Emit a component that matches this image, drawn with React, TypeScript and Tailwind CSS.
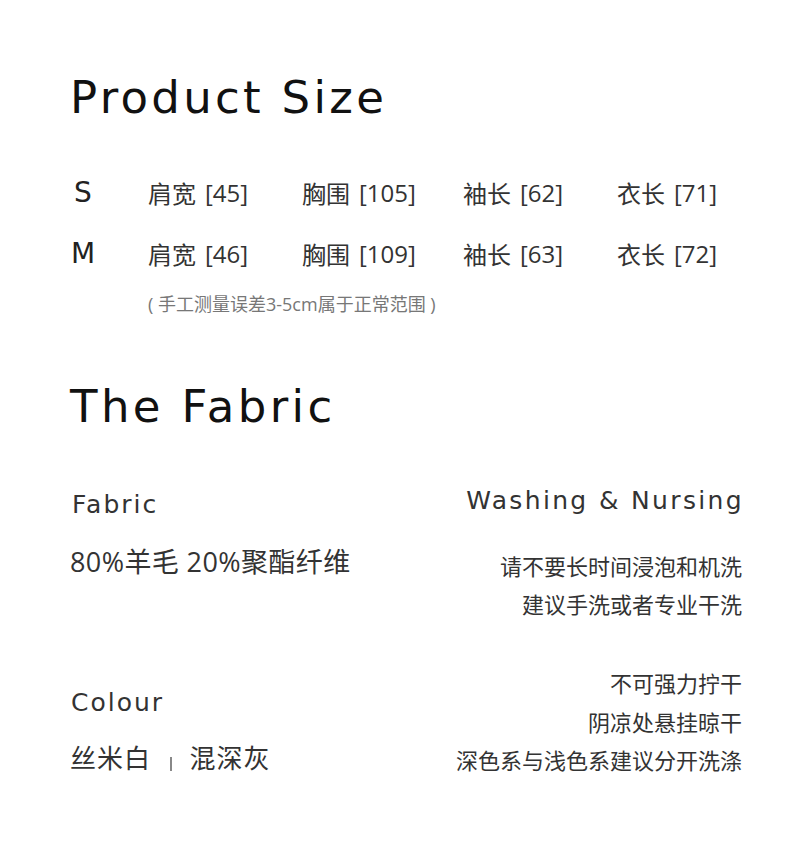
import React from 'react';

const latin = "font-['DejaVu_Sans',sans-serif]";
const cjk = "font-['Noto_Sans_CJK_SC',sans-serif]";
const mixed = "font-['Open_Sans','Noto_Sans_CJK_SC',sans-serif]";

const sizes = [
  { size: 'S', values: ['45', '105', '62', '71'] },
  { size: 'M', values: ['46', '109', '63', '72'] },
];
const labels = ['肩宽', '胸围', '袖长', '衣长'];

const SizeRow: React.FC<{ size: string; values: string[] }> = ({ size, values }) => (
  <div className="grid grid-cols-[78px_154px_161px_154px_auto] items-center h-[61px]">
    <span className={`${latin} text-[28px] text-[#222] text-center w-[26px]`}>{size}</span>
    {values.map((v, i) => (
      <span key={i} className={`${mixed} text-[24px] text-[#333] flex items-center`}>
        <span className={cjk}>{labels[i]}</span>
        <span className="ml-[9px]">[{v}]</span>
      </span>
    ))}
  </div>
);

const App: React.FC = () => {
  return (
    <div className="w-[790px] h-[856px] bg-white pl-[70px] pr-[48px] pt-[75px] overflow-hidden">
      <h1 className={`${latin} text-[45px] leading-[45px] text-[#111] tracking-[3.3px]`}>Product Size</h1>

      <div className="mt-[42px]">
        {sizes.map((s) => (
          <SizeRow key={s.size} size={s.size} values={s.values} />
        ))}
      </div>
      <p className={`${mixed} text-[18px] leading-[24px] text-[#777] ml-[78px] mt-[8px]`}>
        ( 手工测量误差3-5cm属于正常范围 )
      </p>

      <h2 className={`${latin} text-[45px] leading-[45px] text-[#111] tracking-[3.4px] mt-[68px]`}>The Fabric</h2>

      <div className="flex justify-between mt-[52px]">
        <div className="flex flex-col">
          <div className={`${latin} text-[25px] leading-[40px] text-[#333] tracking-[2px] ml-[2px] mt-[4px]`}>Fabric</div>
          <div className={`${mixed} text-[27px] leading-[40px] text-[#333] tracking-[0.4px] mt-[17px]`}>80%羊毛 20%聚酯纤维</div>
          <div className={`${latin} text-[25px] leading-[40px] text-[#333] tracking-[2px] ml-[1px] mt-[101px]`}>Colour</div>
          <div className={`${cjk} text-[26px] leading-[40px] text-[#333] tracking-[1px] mt-[14px] flex items-start`}>
            <span>丝米白</span>
            <span className="w-[1.5px] h-[14px] bg-[#888] mt-[20px] ml-[19px] mr-[18px]" />
            <span>混深灰</span>
          </div>
        </div>
        <div className="flex flex-col items-end">
          <div className={`${latin} text-[25px] leading-[40px] text-[#333] tracking-[2.35px] -mr-[2px]`}>Washing &amp; Nursing</div>
          <div className={`${cjk} text-[22px] leading-[38px] text-[#333] text-right mt-[25px]`}>
            <p>请不要长时间浸泡和机洗</p>
            <p>建议手洗或者专业干洗</p>
          </div>
          <div className={`${cjk} text-[22px] leading-[38.5px] text-[#333] text-right mt-[41px]`}>
            <p>不可强力拧干</p>
            <p>阴凉处悬挂晾干</p>
            <p>深色系与浅色系建议分开洗涤</p>
          </div>
        </div>
      </div>
    </div>
  );
};

export default App;
